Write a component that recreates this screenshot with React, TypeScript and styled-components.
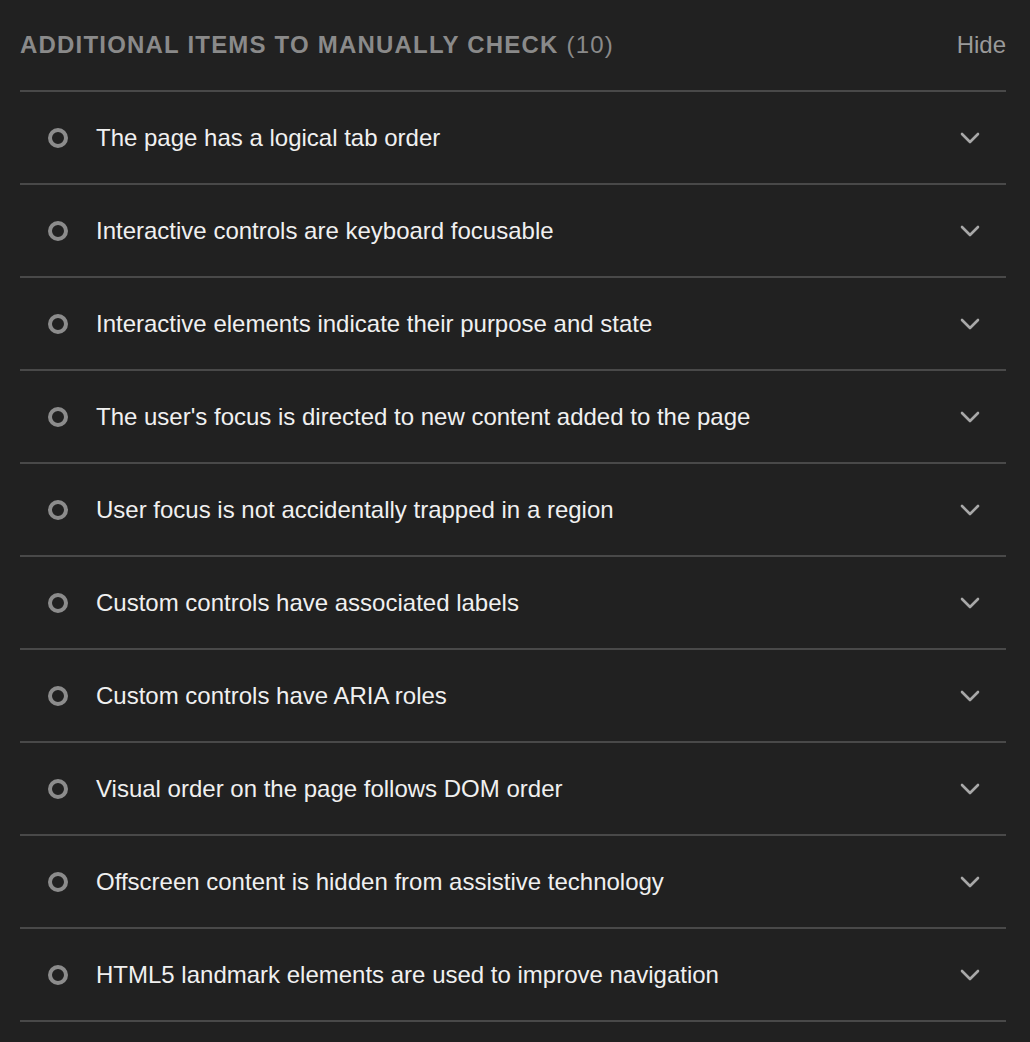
import React from 'react'
import styled, { createGlobalStyle } from 'styled-components'

const GlobalStyle = createGlobalStyle`
  html, body {
    margin: 0;
    padding: 0;
    background: #212121;
  }
  body {
    font-family: 'Liberation Sans', Arial, sans-serif;
  }
`

const Panel = styled.section`
  padding: 0 24px 0 20px;
  background: #212121;
  min-height: 1042px;
  box-sizing: border-box;
`

const Header = styled.div`
  height: 90px;
  display: flex;
  align-items: center;
  justify-content: space-between;
  border-bottom: 2px solid #494949;
`

const Title = styled.h2`
  margin: 0;
  font-size: 24px;
  font-weight: 700;
  letter-spacing: 1.2px;
  text-transform: uppercase;
  color: #8a8a8a;
`

const Count = styled.span`
  font-weight: 400;
`

const HideButton = styled.button`
  background: none;
  border: 0;
  padding: 0;
  font-family: inherit;
  font-size: 24px;
  color: #9a9a9a;
  cursor: pointer;
`

const List = styled.ul`
  list-style: none;
  margin: 0;
  padding: 0;
`

const Row = styled.li`
  height: 91px;
  display: flex;
  align-items: center;
  border-bottom: 2px solid #494949;
  padding: 0 26px 0 28px;
`

const Marker = styled.span`
  width: 12px;
  height: 12px;
  border: 4px solid #8c8c8c;
  border-radius: 50%;
  flex: none;
  margin-right: 28px;
`

const Label = styled.span`
  flex: 1;
  font-size: 24px;
  color: #f0f0f0;
`

const Chevron = () => (
  <svg width="20" height="12" viewBox="0 0 20 12" fill="none">
    <path d="M2 2l8 8 8-8" stroke="#a8a8a8" strokeWidth="2.6" strokeLinecap="round" strokeLinejoin="round" />
  </svg>
)

const items = [
  'The page has a logical tab order',
  'Interactive controls are keyboard focusable',
  'Interactive elements indicate their purpose and state',
  "The user's focus is directed to new content added to the page",
  'User focus is not accidentally trapped in a region',
  'Custom controls have associated labels',
  'Custom controls have ARIA roles',
  'Visual order on the page follows DOM order',
  'Offscreen content is hidden from assistive technology',
  'HTML5 landmark elements are used to improve navigation',
]

export default function App() {
  return (
    <>
      <GlobalStyle />
      <Panel>
        <Header>
          <Title>
            Additional items to manually check <Count>({items.length})</Count>
          </Title>
          <HideButton>Hide</HideButton>
        </Header>
        <List>
          {items.map((item) => (
            <Row key={item}>
              <Marker />
              <Label>{item}</Label>
              <Chevron />
            </Row>
          ))}
        </List>
      </Panel>
    </>
  )
}
